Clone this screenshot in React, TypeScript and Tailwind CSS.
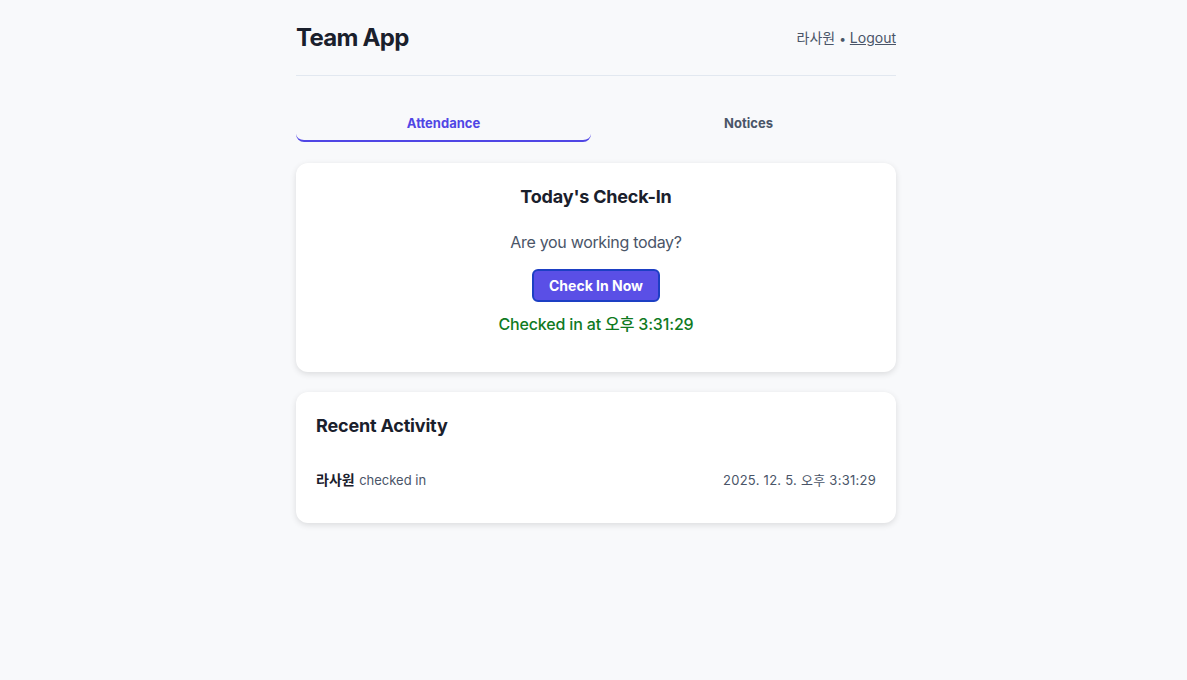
export default function App() {
  const font = { fontFamily: 'Inter, "Noto Sans CJK KR", sans-serif' };
  return (
    <div className="min-h-screen bg-[#f8f9fb] pl-[5px] text-[#1a202c]" style={font}>
      <div className="mx-auto w-[600px]">
        {/* Header */}
        <header className="flex items-center justify-between border-b border-[#e2e8f0] pt-6 pb-[23px]">
          <h1 className="text-2xl leading-7 font-bold tracking-[-0.03em] text-[#1a202c]">Team App</h1>
          <div className="text-sm leading-5 text-[#4a5568]">
            라사원 <span className="text-xs">•</span> <a className="underline" href="#">Logout</a>
          </div>
        </header>

        {/* Tabs */}
        <nav className="mt-[28px] flex gap-[10px]">
          <button className="flex-1 rounded-b-lg border-b-2 border-[#5046e5] pt-[10px] pb-2 text-[13px] leading-[18px] font-bold text-[#5046e5]">
            Attendance
          </button>
          <button className="flex-1 border-b-2 border-transparent pt-[10px] pb-2 text-[13px] leading-[18px] font-bold text-[#4a5568]">
            Notices
          </button>
        </nav>

        {/* Check-in card */}
        <section className="mt-[21px] rounded-xl bg-white px-5 pt-5 pb-9 text-center shadow-[0_2px_6px_rgba(0,0,0,0.12)]">
          <h2 className="text-lg leading-7 font-bold tracking-[-0.01em] text-[#1a202c]">Today's Check-In</h2>
          <p className="mt-[19px] text-base leading-6 tracking-[-0.02em] text-[#4a5568]">Are you working today?</p>
          <button className="mt-[15px] rounded-md border-2 border-[#1d3fc4] bg-[#5a4fe6] px-[15px] py-[5px] text-sm leading-[19px] font-bold text-white">
            Check In Now
          </button>
          <p className="mt-[10px] text-base leading-6 font-medium tracking-[-0.01em] text-[#0f7a1f]">Checked in at 오후 3:31:29</p>
        </section>

        {/* Recent activity */}
        <section className="mt-5 rounded-xl bg-white px-5 pt-5 pb-[33px] shadow-[0_2px_6px_rgba(0,0,0,0.12)]">
          <h2 className="text-lg leading-7 font-bold tracking-[-0.01em] text-[#1a202c]">Recent Activity</h2>
          <ul className="mt-[29px]">
            <li className="flex items-center justify-between leading-5">
              <span>
                <strong className="text-sm font-bold text-[#1a202c]">라사원</strong>{' '}
                <span className="text-[13px] text-[#4a5568]">checked in</span>
              </span>
              <span className="text-[13px] tracking-[0.02em] text-[#4a5568]">2025. 12. 5. 오후 3:31:29</span>
            </li>
          </ul>
        </section>
      </div>
    </div>
  );
}
